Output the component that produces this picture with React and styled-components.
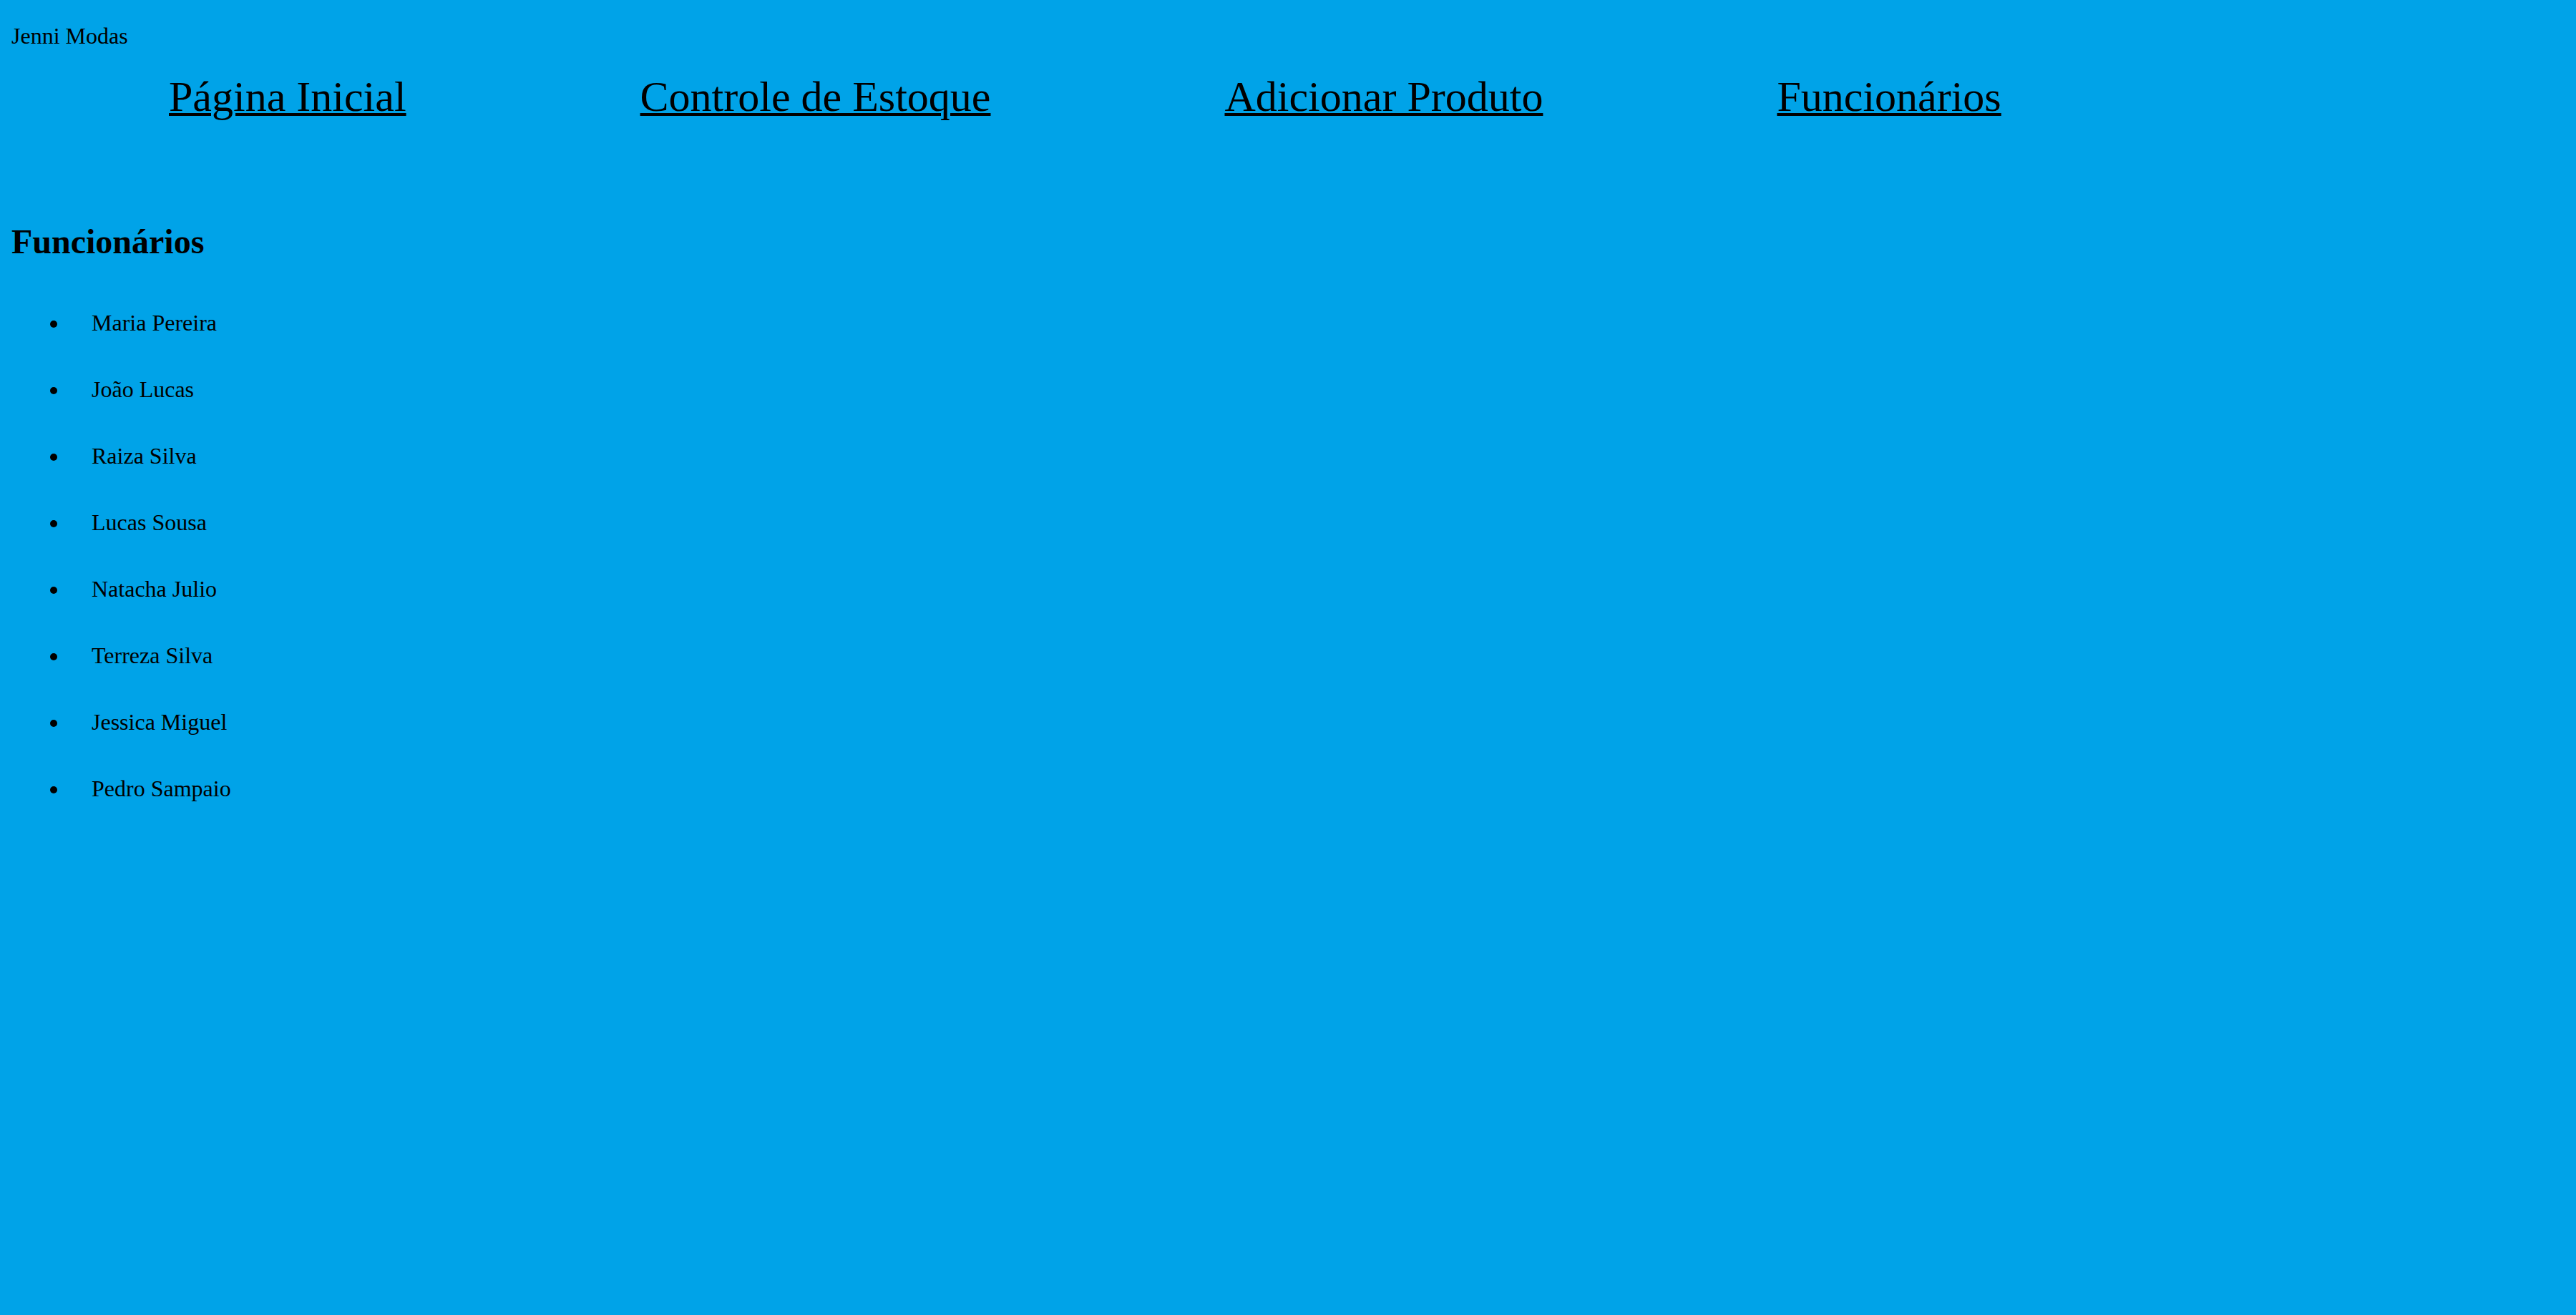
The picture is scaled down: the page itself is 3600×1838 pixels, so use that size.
import React from "react";
import styled, { createGlobalStyle } from "styled-components";

const GlobalStyle = createGlobalStyle`
  html {
    background: #00a3e8;
  }
  body {
    margin: 0;
    padding: 32px 16px 16px;
    color: #000;
    font-family: "Liberation Serif", "Times New Roman", serif;
    font-size: 32px;
  }
`;

const Header = styled.header`
  padding-bottom: 140px;
`;

const Brand = styled.p`
  margin: 0 0 32px;
  font-size: 32px;
`;

const Nav = styled.ul`
  display: flex;
  column-gap: 327px;
  list-style: none;
  margin: 0;
  padding: 0 0 0 220px;
`;

const NavLink = styled.a`
  font-size: 60px;
  color: #000;
  text-decoration: underline;
  text-decoration-thickness: 4px;
  text-underline-offset: 3px;
`;

const Title = styled.h2`
  margin: 0 0 40px;
  font-size: 48px;
  font-weight: bold;
`;

const StaffList = styled.ul`
  margin: 0;
  padding-left: 80px;
  list-style: disc;
`;

const StaffItem = styled.li`
  padding: 28px 32px;
  font-size: 32px;
`;

const links = [
  "Página Inicial",
  "Controle de Estoque",
  "Adicionar Produto",
  "Funcionários",
];

const staff = [
  "Maria Pereira",
  "João Lucas",
  "Raiza Silva",
  "Lucas Sousa",
  "Natacha Julio",
  "Terreza Silva",
  "Jessica Miguel",
  "Pedro Sampaio",
];

const App = () => {
  return (
    <>
      <GlobalStyle />
      <Header>
        <Brand>Jenni Modas</Brand>
        <Nav>
          {links.map((label) => (
            <li key={label}>
              <NavLink href="#">{label}</NavLink>
            </li>
          ))}
        </Nav>
      </Header>
      <main>
        <Title>Funcionários</Title>
        <StaffList>
          {staff.map((name) => (
            <StaffItem key={name}>{name}</StaffItem>
          ))}
        </StaffList>
      </main>
    </>
  );
};

export default App;
